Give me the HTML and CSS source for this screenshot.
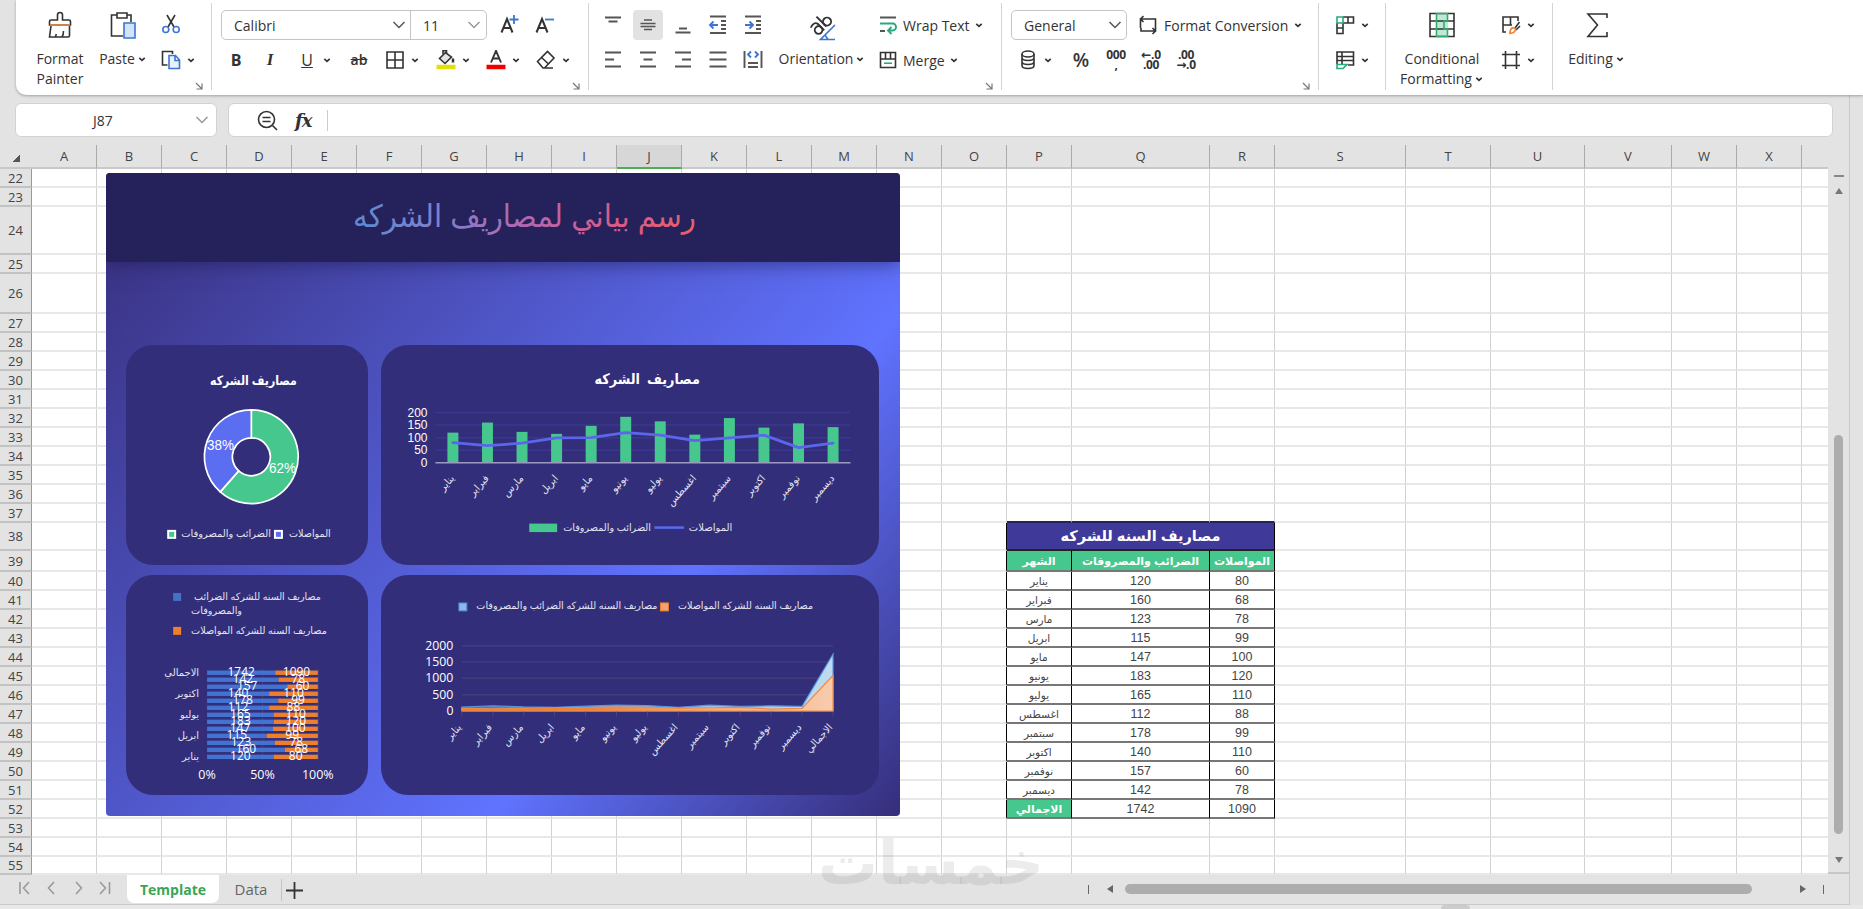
FILE: index.html
```html
<!DOCTYPE html>
<html lang="en">
<head>
    <meta charset="UTF-8">
    <meta name="viewport" content="width=device-width, initial-scale=1.0">
    <title>Template</title>
    <link rel="stylesheet" href="styles.css">
</head>
<body>
    <svg class="defs">
        <symbol id="chev" viewBox="0 0 10 10"><path d="M2.300 3.800 5 6.300 7.700 3.800" fill="none" stroke="#333" stroke-width="1.7"/></symbol>
        <symbol id="caret" viewBox="0 0 14 10"><path d="M1.500 2 7 7.500 12.500 2" fill="none" stroke="currentColor" stroke-width="1.5"/></symbol>
        <symbol id="corner" viewBox="0 0 8 8"><path d="M1 1 6.500 6.500M7 1.500V7H1.500" fill="none" stroke="#777" stroke-width="1.2"/></symbol>
    </svg>

    <div class="ribbon">
        <div class="group clipboard">
            <div class="big painter">
                <svg width="26" height="28" viewBox="0 0 26 28" class="ic"><path d="M10.500 9V4a2.500 2.500 0 0 1 5 0V9H22a1.500 1.500 0 0 1 1.500 1.500V14h-21v-3.500A1.500 1.500 0 0 1 4 9zM4 15 2.500 26H21a1.500 1.500 0 0 0 1.500-1.500V15M15 26q1.500-2 1.500-6M8.500 26l.8-3"/><path d="M3 14h20" stroke="#f08a3c"/></svg>
                <span>Format<br>Painter</span>
            </div>
            <div class="big paste">
                <svg width="28" height="28" viewBox="0 0 28 28" class="ic"><path d="M8 4H2.500v21H14M18 4h4v7M8 2h10v5H8z"/><path d="M15 12h11v15H15z" fill="#cfe6fa" stroke="#3f74d1"/></svg>
                <span>Paste<svg class="chev"><use href="#chev"/></svg></span>
            </div>
            <div class="stack">
                <svg width="20" height="20" viewBox="0 0 20 20" class="ic"><path d="M6 1l7 12M14 1 7 13"/><circle cx="4.800" cy="15.500" r="3" stroke="#3f74d1"/><circle cx="15.200" cy="15.500" r="3" stroke="#3f74d1"/></svg>
                <div class="drop"><svg width="20" height="20" viewBox="0 0 20 20" class="ic"><path d="M6.500 15H1.500V1.500h10V4"/><path d="M8 5.500h6.500L18.500 10v8.500H8zM14 6v4.500h4" stroke="#3f74d1" fill="#eaf3fd"/></svg><svg class="chev"><use href="#chev"/></svg></div>
            </div>
            <svg class="corner"><use href="#corner"/></svg>
        </div>

        <div class="group font">
            <div class="row">
                <div class="combo">
                    <div class="name">Calibri<svg class="caret"><use href="#caret"/></svg></div>
                    <div class="size">11<svg class="caret light"><use href="#caret"/></svg></div>
                </div>
                <svg width="20" height="22" viewBox="0 0 20 22" class="ic grow"><path d="M1.500 18.500 7 5l5.500 13.500M3.500 14h7" stroke-width="2"/><path d="M14 1v9M9.500 5.500h9" stroke="#3f74d1" stroke-width="1.800"/></svg>
                <svg width="20" height="22" viewBox="0 0 20 22" class="ic shrink"><path d="M1.500 18.500 7 5l5.500 13.500M3.500 14h7" stroke-width="2"/><path d="M10 5.500h9" stroke="#3f74d1" stroke-width="1.800"/></svg>
            </div>
            <div class="row marks">
                <b class="mark">B</b>
                <i class="mark">I</i>
                <div class="drop"><u class="mark">U</u><svg class="chev"><use href="#chev"/></svg></div>
                <s class="mark">ab</s>
                <div class="drop"><svg width="20" height="20" viewBox="0 0 20 20" class="ic"><path d="M2 2h16v16H2zM10 2v16M2 10h16"/></svg><svg class="chev"><use href="#chev"/></svg></div>
                <div class="drop"><svg width="20" height="20" viewBox="0 0 20 20" class="ic"><path d="M9.500 2.500 3.500 8.500l5.500 5 6.500-6.500z" fill="#e4e4e4"/><path d="M7 4V.800h3.500V4"/><path d="M17 8.500v4" stroke-width="2.500"/><path d="M.5 17h19" stroke="#e3df0b" stroke-width="4.500"/></svg><svg class="chev"><use href="#chev"/></svg></div>
                <div class="drop"><svg width="20" height="20" viewBox="0 0 20 20" class="ic"><path d="M5 12.500 10 .800l5 11.700M6.500 8.500h7" stroke-width="1.900"/><path d="M.5 17h19" stroke="#f00000" stroke-width="4.500"/></svg><svg class="chev"><use href="#chev"/></svg></div>
                <div class="drop"><svg width="20" height="20" viewBox="0 0 20 20" class="ic"><path d="M1.500 11.500 11.500 1.500l6.500 6.500L8.500 18H7zM5.500 7.500l7 6.500M7 18h10"/></svg><svg class="chev"><use href="#chev"/></svg></div>
            </div>
            <svg class="corner"><use href="#corner"/></svg>
        </div>

        <div class="group align">
            <div class="aligns">
                <span><svg width="20" height="20" viewBox="0 0 20 20" class="ln"><path d="M2 2.500h16M5.500 6.500h9"/></svg></span>
                <span class="on"><svg width="20" height="20" viewBox="0 0 20 20" class="ln"><path d="M6 5h8M2.500 8.500h15M2.500 11.500h15M6 14.500h8" stroke-width="1.600"/></svg></span>
                <span><svg width="20" height="20" viewBox="0 0 20 20" class="ln"><path d="M6 13.500h8M2.500 17.500h15"/></svg></span>
                <span><svg width="20" height="20" viewBox="0 0 20 20" class="ln"><path d="M2 1.500h16M13 6h5M13 10h5M13 14h5M2 18h16"/><path d="M10 10H2M5.500 6.500 2 10l3.500 3.500" stroke="#3f74d1"/></svg></span>
                <span><svg width="20" height="20" viewBox="0 0 20 20" class="ln"><path d="M2 1.500h16M13 6h5M13 10h5M13 14h5M2 18h16"/><path d="M2 10h8M6.500 6.500 10 10l-3.500 3.500" stroke="#3f74d1"/></svg></span>
                <span><svg width="20" height="20" viewBox="0 0 20 20" class="ln"><path d="M2 2.500h16M2 9.500h9M2 16.500h16"/></svg></span>
                <span><svg width="20" height="20" viewBox="0 0 20 20" class="ln"><path d="M2 2.500h16M5.500 9.500h9M2 16.500h16"/></svg></span>
                <span><svg width="20" height="20" viewBox="0 0 20 20" class="ln"><path d="M2 2.500h16M9 9.500h9M2 16.500h16"/></svg></span>
                <span><svg width="20" height="20" viewBox="0 0 20 20" class="ln"><path d="M1.500 2.500h17M1.500 9.500h17M1.500 16.500h17"/></svg></span>
                <span><svg width="20" height="20" viewBox="0 0 20 20" class="ln"><path d="M1.500 1v17M18.500 1v17M5 13h10M5 17h10"/><path d="M8 1.500 5 4.500l3 3M12 1.500l3 3-3 3" stroke="#3f74d1"/></svg></span>
            </div>
            <div class="big orient">
                <svg width="28" height="30" viewBox="0 0 28 30" class="ic"><g transform="rotate(45 12 12)" stroke-width="1.900"><circle cx="6" cy="16" r="3.800" transform="rotate(-90 12 12)"/><path d="M16 15.700V6.500q-.5-3-4-3-2.500 0-3.500 1" transform="rotate(-90 12 12) translate(-6.200 4.500)"/><path d="M10 -2v14" transform="rotate(-90 12 12) translate(4 7)"/><circle cx="18" cy="16" r="4" transform="rotate(-90 12 12)"/></g><path d="M27 14 12.500 28.500H27M17 24l3 4.500" stroke="#3f74d1"/></svg>
                <span>Orientation<svg class="chev"><use href="#chev"/></svg></span>
            </div>
            <div class="stack labels">
                <div class="labeled"><svg width="18" height="20" viewBox="0 0 18 20" class="ic"><path d="M1 2.500h16M1 16h5" stroke="#555" stroke-width="2"/><path d="M1 8.500h13a3 3.500 0 0 1 0 7H9.500M12.500 12l-3.500 3.500 3.500 3.500" stroke="#2ba882" stroke-width="1.900"/></svg>Wrap Text<svg class="chev"><use href="#chev"/></svg></div>
                <div class="labeled"><svg width="18" height="20" viewBox="0 0 18 20" class="ic"><path d="M1.500 2.500h15v15h-15zM1.500 9h15M6.500 2.500V9M11.500 2.500V9"/><path d="M5 13.200h8" stroke="#2ba882"/></svg>Merge<svg class="chev"><use href="#chev"/></svg></div>
            </div>
            <svg class="corner"><use href="#corner"/></svg>
        </div>

        <div class="group number">
            <div class="row">
                <div class="combo general"><div>General<svg class="caret"><use href="#caret"/></svg></div></div>
                <div class="labeled conv"><svg width="18" height="20" viewBox="0 0 18 20" class="ic"><path d="M1.500 13V4h15v3M4.500 1 1.500 4l3 3M16.500 7v9H2v-3M13.500 13l3 3-3 3"/></svg>Format Conversion<svg class="chev"><use href="#chev"/></svg></div>
            </div>
            <div class="row nums">
                <div class="drop"><svg width="20" height="20" viewBox="0 0 20 20" class="ic"><ellipse cx="10" cy="4" rx="6" ry="3"/><path d="M4 4v3.500c0 4 12 4 12 0V4M4 7.500v4c0 4 12 4 12 0v-4M4 11.500v4c0 4 12 4 12 0v-4"/></svg><svg class="chev"><use href="#chev"/></svg></div>
                <span class="pct">%</span>
                <span class="tiny">000<br>,</span>
                <span class="tiny">&#8592;.0<br>.00</span>
                <span class="tiny">.00<br>&#8594;.0</span>
            </div>
            <svg class="corner"><use href="#corner"/></svg>
        </div>

        <div class="group cells">
            <div class="drop"><svg width="20" height="20" viewBox="0 0 20 20" class="ic"><path d="M8 2h10.500v6H8M13 2v6M2 8v10.500h6V8M2 13h6"/><path d="M2 2h6v6H2z" stroke="#2ba882"/></svg><svg class="chev"><use href="#chev"/></svg></div>
            <div class="drop"><svg width="20" height="20" viewBox="0 0 20 20" class="ic"><path d="M2 14V2h16.500v13H13M2 6.500h16.500M7 2v12M2 10.500h16.500"/><path d="M2 14.500h10l-4 4H2z" stroke="#2ba882"/></svg><svg class="chev"><use href="#chev"/></svg></div>
        </div>

        <div class="group styles">
            <div class="big cond">
                <svg width="26" height="28" viewBox="0 0 26 28" class="ic"><path d="M8 2h11v24H8z" fill="#bfeadb" stroke="none"/><path d="M1 2.500h24v23H1zM1 10h24M1 18h24"/><path d="M7.500 2.500h11v7.500h-3.500v8h3.500v7.500h-11z" stroke="#34ad6c"/></svg>
                <span>Conditional<br>Formatting<svg class="chev"><use href="#chev"/></svg></span>
            </div>
            <div class="stack">
                <div class="drop"><svg width="20" height="20" viewBox="0 0 20 20" class="ic"><path d="M5 17H2V2h15v4M2 10h9M9.500 2v8M18.500 7 14 13M19 11l-4 4"/><path d="M9 18.500c0-4 1.500-6 4-5.500s2 5-4 5.500z" stroke="#f08030"/></svg><svg class="chev"><use href="#chev"/></svg></div>
                <div class="drop"><svg width="20" height="20" viewBox="0 0 20 20" class="ic"><path d="M4.500 1v18M15.500 1v18M1 4.500h18M1 15.500h18"/></svg><svg class="chev"><use href="#chev"/></svg></div>
            </div>
        </div>

        <div class="group editing">
            <div class="big">
                <svg width="24" height="28" viewBox="0 0 24 28" class="ic"><path d="M22 7V3H3l9.500 11L3 25.500h19V21"/></svg>
                <span>Editing<svg class="chev"><use href="#chev"/></svg></span>
            </div>
        </div>
    </div>

    <div class="main">
        <div class="left">
            <div class="formula">
                <div class="namebox">J87<svg class="caret light"><use href="#caret"/></svg></div>
                <div class="fbar">
                    <svg width="21" height="21" viewBox="0 0 21 21" class="ic"><circle cx="9.500" cy="9.500" r="8"/><path d="M15.500 15.500 20 20M5.500 7.500h8M5.500 11.500h8"/></svg>
                    <span class="fx">fx</span>
                    <span class="bar"></span>
                </div>
            </div>

            <div class="sheet">
                <table class="grid" id="grid"></table>

                <!-- charts floating above the cells -->
                <div class="dash">
                    <div class="dash-head">
                        <svg width="794" height="89">
                            <linearGradient id="title" x1="0" x2="1"><stop offset="0" stop-color="#5a8bd2"/><stop offset=".25" stop-color="#8080cc"/><stop offset=".5" stop-color="#b068b0"/><stop offset=".78" stop-color="#dc5a84"/><stop offset="1" stop-color="#e85f68"/></linearGradient>
                            <text x="247" y="54" font-size="31" textLength="343" lengthAdjust="spacingAndGlyphs" fill="url(#title)">رسم بياني لمصاريف الشركه</text>
                        </svg>
                    </div>
                    <div class="cards">
                        <svg class="card" viewBox="0 0 242 220">
                            <text x="84" y="40" font-size="13" font-weight="bold" textLength="87" lengthAdjust="spacingAndGlyphs">مصاريف الشركه</text>
                            <g stroke="#fff" stroke-width="1.700">
                                <path d="M125.300 65A47 47 0 1 1 94.200 147.200L112.700 126.200A19 19 0 1 0 125.300 93z" fill="#45c78d"/>
                                <path d="M94.200 147.200A47 47 0 0 1 125.300 65V93A19 19 0 0 0 112.700 126.200z" fill="#5b6df0"/>
                            </g>
                            <text x="81" y="105.500" font-size="14" textLength="27" lengthAdjust="spacingAndGlyphs">38%</text>
                            <text x="143" y="128.500" font-size="14" textLength="27" lengthAdjust="spacingAndGlyphs">62%</text>
                            <rect x="42" y="186.300" width="7" height="7" fill="#45c78d" stroke="#fff" stroke-width="2"/>
                            <rect x="149" y="186.300" width="7" height="7" fill="#5b6df0" stroke="#fff" stroke-width="2"/>
                            <text class="leg" x="55" y="192" textLength="90" lengthAdjust="spacingAndGlyphs">الضرائب والمصروفات</text>
                            <text class="leg" x="163" y="192" textLength="42" lengthAdjust="spacingAndGlyphs">المواصلات</text>
                        </svg>
                        <svg class="card" viewBox="0 0 498 220">
                            <text x="213.500" y="39.500" font-size="14.500" font-weight="bold" textLength="105.500" lengthAdjust="spacingAndGlyphs" xml:space="preserve">مصاريف  الشركه</text>
                            <g id="combo"></g>
                            <rect x="148" y="179" width="28" height="8.500" fill="#45c78d"/>
                            <path d="M273.500 183H303" stroke="#5b6bf0" stroke-width="2.500"/>
                            <text class="leg" x="182" y="186.500" textLength="88" lengthAdjust="spacingAndGlyphs">الضرائب والمصروفات</text>
                            <text class="leg" x="308" y="186.500" textLength="43.500" lengthAdjust="spacingAndGlyphs">المواصلات</text>
                        </svg>
                        <svg class="card" viewBox="0 0 242 220">
                            <rect x="47" y="18" width="8" height="8" fill="#4472c4"/>
                            <rect x="47" y="52" width="8" height="8" fill="#ec7f2e"/>
                            <text class="leg" x="68" y="25" textLength="127" lengthAdjust="spacingAndGlyphs">مصاريف السنه للشركه الضرائب</text>
                            <text class="leg" x="65" y="39.300" textLength="51" lengthAdjust="spacingAndGlyphs">والمصروفات</text>
                            <text class="leg" x="65" y="59" textLength="136" lengthAdjust="spacingAndGlyphs">مصاريف السنه للشركه المواصلات</text>
                            <g id="stacked" class="os"></g>
                        </svg>
                        <svg class="card" viewBox="0 0 498 220">
                            <linearGradient id="blues" x1="0" x2="1"><stop offset="0" stop-color="#4472c4"/><stop offset=".5" stop-color="#8fb9e2"/><stop offset="1" stop-color="#bddcf0"/></linearGradient>
                            <linearGradient id="oranges" x1="0" x2="1"><stop offset="0" stop-color="#ed7d31"/><stop offset=".35" stop-color="#ed8338"/><stop offset=".7" stop-color="#f3ae80"/><stop offset="1" stop-color="#f8cbad"/></linearGradient>
                            <rect x="77.500" y="28" width="8" height="8" fill="#8fb9e2" stroke="#4a86d0"/>
                            <rect x="279.500" y="28" width="8" height="8" fill="#f2a46c" stroke="#ed7d31"/>
                            <text class="leg" x="95" y="34.500" textLength="181.500" lengthAdjust="spacingAndGlyphs">مصاريف السنه للشركه الضرائب والمصروفات</text>
                            <text class="leg" x="297" y="34.500" textLength="135.500" lengthAdjust="spacingAndGlyphs">مصاريف السنه للشركه المواصلات</text>
                            <g id="area" class="os"></g>
                        </svg>
                    </div>
                </div>

                <div class="vscroll">
                    <i class="dashmark"></i>
                    <i class="up"></i>
                    <i class="vthumb"></i>
                    <i class="down"></i>
                </div>
            </div>

            <div class="tabs">
                <svg width="94" height="14" viewBox="0 0 94 14" class="nav"><path d="M1 1v12M10 1 4.500 7 10 13M35 1 29.500 7 35 13M57 1l5.500 6L57 13M81 1l5.500 6L81 13M90.500 1v12"/></svg>
                <span class="tab active">Template</span>
                <span class="tab">Data</span>
                <span class="plus"><svg width="17" height="17" viewBox="0 0 17 17" class="ic"><path d="M8.500 0v17M0 8.500h17" stroke-width="1.800"/></svg></span>
                <div class="hscroll">
                    <i class="tick"></i>
                    <i class="prev"></i>
                    <i class="hthumb"></i>
                    <i class="next"></i>
                    <i class="tick"></i>
                </div>
            </div>
            <svg class="watermark" width="228" height="64"><text x="0" y="48" font-size="60" font-weight="bold" textLength="226" lengthAdjust="spacingAndGlyphs">خمسات</text></svg>
        </div>
        <div class="side"></div>
    </div>
    <div class="status"><i></i></div>

    <script>
        const months = ['يناير', 'فبراير', 'مارس', 'ابريل', 'مايو', 'يونيو', 'يوليو', 'اغسطس', 'سبتمبر', 'اكتوبر', 'نوفمبر', 'ديسمبر', 'الاجمالي'];
        const taxes = [120, 160, 123, 115, 147, 183, 165, 112, 178, 140, 157, 142, 1742];
        const transport = [80, 68, 78, 99, 100, 120, 110, 88, 99, 110, 60, 78, 1090];

        // sheet
        const widths = { Q: 138, S: 131, T: 85, U: 94, V: 87 };
        const heights = { 24: 48, 26: 40, 38: 28, 39: 21, 55: 18 };
        const cols = 'ABCDEFGHIJKLMNOPQRSTUVWX'.split('');
        let html = '<colgroup><col style="width:32px">';
        cols.forEach(c => html += `<col style="width:${widths[c] || 65}px">`);
        html += '<col style="width:26px"></colgroup><tr class="head"><th class="all"></th>';
        cols.forEach(c => html += `<th class="${c === 'J' ? 'sel' : ''}">${c}</th>`);
        html += '<th class="last"></th></tr>';

        for (let r = 22; r <= 55; r++) {
            html += `<tr style="height:${heights[r] || 19}px"><th>${r}</th>`;
            cols.concat('').forEach(c => {
                const inTable = r >= 38 && r <= 52;
                if (r === 38 && c === 'P') {
                    html += '<td colspan="3" class="box title">مصاريف السنه للشركه</td>';
                } else if (r === 38 && (c === 'Q' || c === 'R')) {
                    return;
                } else if (inTable && 'PQR'.includes(c) && c) {
                    const i = 'PQR'.indexOf(c);
                    const text = r === 39 ? ['الشهر', 'الضرائب والمصروفات', 'المواصلات'][i] : [months, taxes, transport][i][r - 40];
                    const green = r === 39 || (r === 52 && c === 'P');
                    html += `<td class="box ${green ? 'green' : ''} ${c === 'P' ? 'ar' : ''}">${text}</td>`;
                } else {
                    const edge = inTable && c === 'O' ? 'edge' : r === 37 && c && 'PQR'.includes(c) ? 'over' : '';
                    html += `<td class="${edge}"></td>`;
                }
            });
            html += '</tr>';
        }
        document.getElementById('grid').innerHTML = html;

        // columns with line
        let s = '';
        [200, 150, 100, 50, 0].forEach(v => {
            const y = 118 - v * 0.2515;
            s += `<path d="M54 ${y}H470" stroke="#3d3690" stroke-width="1.5"/><text x="46" y="${y + 4}" font-size="12" text-anchor="end">${v}</text>`;
        });
        let points = '';
        for (let i = 0; i < 12; i++) {
            const x = 71.5 + i * 34.64;
            s += `<rect x="${x - 5.5}" y="${118 - taxes[i] * 0.2515}" width="11" height="${taxes[i] * 0.2515}" fill="#45c78d"/>`;
            s += `<text class="leg" text-anchor="end" transform="translate(${x + 2} 134) rotate(-48)">${months[i]}</text>`;
            points += `${x},${118 - transport[i] * 0.2515} `;
        }
        s += `<path d="M54 118H470" stroke="#9c98c0" stroke-width="1.7"/><polyline points="${points}" fill="none" stroke="#5b66ea" stroke-width="2.8" stroke-linejoin="round" stroke-linecap="round"/>`;
        document.getElementById('combo').innerHTML = s;

        // stacked bars, last row on top
        s = '<path d="M136.500 94V185M192.500 94V185" stroke="#46407f"/>';
        let labels = '';
        months.forEach((m, i) => {
            const y = 182.3 - i * 7.03;
            const w = 111 * taxes[i] / (taxes[i] + transport[i]);
            s += `<rect x="81" y="${y - 2.2}" width="${w}" height="4.4" fill="#4472d0"/><rect x="${81 + w}" y="${y - 2.2}" width="${111 - w}" height="4.4" fill="#ec7f2e"/>`;
            labels += `<text x="${81 + w / 2}" y="${y + 3.5}" font-size="12" text-anchor="middle">${taxes[i]}</text><text x="${81 + (111 + w) / 2}" y="${y + 3.5}" font-size="12" text-anchor="middle">${transport[i]}</text>`;
            if (i % 3 === 0) labels += `<text class="leg" x="73" y="${y + 3}" text-anchor="end">${m}</text>`;
        });
        ['0%', '50%', '100%'].forEach((t, i) => labels += `<text x="${81 + i * 55.5}" y="204.5" font-size="12.5" text-anchor="middle">${t}</text>`);
        document.getElementById('stacked').innerHTML = s + labels;

        // areas
        s = '';
        [2000, 1500, 1000, 500, 0].forEach(v => {
            const y = 136.3 - v * 0.03275;
            s += `<path d="M80.5 ${y}H452.5" stroke="#423c7e" stroke-width="1.5"/><text x="72" y="${y + 4}" font-size="12.3" text-anchor="end">${v}</text>`;
        });
        const line = data => data.map((v, i) => `${80.5 + i * 31},${136.3 - v * 0.03275}`).join(' ');
        s += `<polygon points="80.5,136.3 ${line(taxes)} 452.5,136.3" fill="url(#blues)" stroke="#5b93dc" stroke-width="1.2"/>`;
        s += `<polygon points="80.5,136.3 ${line(transport)} 452.5,136.3" fill="url(#oranges)" stroke="#ed8b45" stroke-width="1.2"/>`;
        months.forEach((m, i) => {
            const x = 80.5 + i * 31;
            s += `<path d="M${x} 137v5" stroke="#4a447f"/><text class="leg" text-anchor="end" transform="translate(${x} 153) rotate(-48)">${m}</text>`;
        });
        document.getElementById('area').innerHTML = s;
    </script>
</body>
</html>
```
FILE: styles.css
```css
* {
    box-sizing: border-box;
}

body {
    margin: 0;
    height: 909px;
    overflow: hidden;
    background: #e3e3e3;
    color: #333;
    font-family: "Open Sans", "DejaVu Sans", sans-serif;
    font-size: 14px;
    display: flex;
    flex-direction: column;
}

svg {
    display: block;
    flex-shrink: 0;
}

.defs {
    width: 0;
    height: 0;
    position: absolute;
}

.ic, .ln {
    fill: none;
    stroke: #333;
    stroke-width: 1.6;
}

.ln {
    stroke: #555;
    stroke-width: 1.9;
}

/* ribbon */
.ribbon {
    display: flex;
    height: 95px;
    margin-left: 16px;
    padding-top: 3px;
    background: #fff;
    border-bottom-left-radius: 10px;
    box-shadow: 0 1px 3px rgba(0, 0, 0, 0.3);
    z-index: 1;
}

.group {
    position: relative;
    height: 87px;
    border-right: 1px solid #d4d4d4;
    display: flex;
}

.corner {
    position: absolute;
    right: 8px;
    bottom: 0;
    width: 8px;
    height: 8px;
}

.chev {
    display: inline-block;
    width: 10px;
    height: 10px;
    margin-left: 2px;
}

.drop {
    display: flex;
    align-items: center;
    height: 20px;
    gap: 5px;
}

.drop .chev {
    margin-left: 0;
}

.big {
    display: flex;
    flex-direction: column;
    align-items: center;
    text-align: center;
    line-height: 20px;
    padding-top: 8px;
    white-space: nowrap;
}

.big span {
    margin-top: 10px;
}

.stack {
    display: flex;
    flex-direction: column;
    gap: 15px;
    padding-top: 12px;
}

.row {
    display: flex;
    align-items: center;
}

.labeled {
    display: flex;
    align-items: center;
    height: 20px;
    gap: 5px;
    white-space: nowrap;
}

.clipboard { width: 196px; }
.clipboard .stack { align-items: flex-start; margin-left: 10px; padding-top: 11px; gap: 16px; }
.painter { width: 60px; margin-left: 14px; }
.paste { width: 56px; margin-left: 5px; }

.combo {
    display: flex;
    height: 30px;
    border: 1px solid #c4c4c4;
    border-radius: 5px;
}

.combo div {
    display: flex;
    align-items: center;
    justify-content: space-between;
    padding: 0 4px 0 12px;
}

.caret {
    width: 14px;
    height: 10px;
    color: #555;
}

.light {
    color: #999;
}

.font { width: 377px; flex-direction: column; padding: 7px 0 0 9px; }
.font .name { width: 189px; border-right: 1px solid #c4c4c4; }
.font .size { width: 75px; padding-right: 5px; }
.grow { margin-left: 13px; }
.shrink { margin-left: 15px; }

.marks {
    display: grid;
    grid-template-columns: 34px 37px 52px 36px 51px 49.5px 50.5px 35px;
    margin: 10px 0 0 5px;
}

.mark {
    width: 20px;
    text-align: center;
    font-size: 16px;
    line-height: 20px;
}

s.mark {
    font-weight: 600;
    font-size: 14px;
}

i.mark {
    font-family: "Liberation Serif", serif;
    font-weight: bold;
    font-size: 17px;
}

.align { width: 413px; }

.aligns {
    display: grid;
    grid-template-columns: repeat(5, 30px);
    grid-auto-rows: 30px;
    gap: 5px;
    padding: 7px 0 0 9px;
}

.aligns span {
    display: flex;
    align-items: center;
    justify-content: center;
    border-radius: 4px;
}

.aligns .on {
    background: #e2e2e2;
}

.orient { width: 90px; margin-left: 9px; }
.orient span { margin-top: 8px; }
.align .labels { margin-left: 12px; }

.align .labeled {
    gap: 6px;
}

.align .labeled .chev, .conv .chev {
    margin-left: -2px;
}

.number { width: 317px; flex-direction: column; padding: 7px 0 0 9px; }
.general { width: 116px; }
.general div { width: 100%; }
.conv { margin-left: 12px; gap: 7px; }

.nums {
    display: grid;
    grid-template-columns: 50px 34px 35px 35px 35px;
    margin: 10px 0 0 7px;
}

.pct {
    width: 26px;
    font-size: 19px;
    font-weight: 600;
    line-height: 20px;
    text-align: center;
}

.tiny {
    width: 28px;
    font-size: 12px;
    font-weight: bold;
    line-height: 10px;
    text-align: center;
    letter-spacing: -0.3px;
}

.cells { width: 67px; flex-direction: column; gap: 15px; padding: 12px 0 0 16px; }
.styles { width: 167px; }
.cond { width: 92px; margin-left: 10px; }
.styles .stack { margin-left: 13px; }
.editing { border: 0; }
.editing .big { width: 87px; }

/* formula bar */
.main {
    display: flex;
    height: 810px;
}

.left {
    position: relative;
    width: 1849px;
}

.side {
    flex: 1;
    border-left: 1px solid #c9c9c9;
}

.formula {
    display: flex;
    gap: 11px;
    height: 50px;
    padding: 8px 0 0 15px;
}

.namebox, .fbar {
    display: flex;
    align-items: center;
    height: 34px;
    background: #fff;
    border: 1px solid #d2d2d2;
    border-radius: 6px;
}

.namebox {
    width: 202px;
    padding: 0 7px 0 77px;
    justify-content: space-between;
}

.fbar {
    width: 1605px;
    padding-left: 28px;
}

.fx {
    margin-left: 17px;
    font: italic bold 18px "DejaVu Serif", serif;
    letter-spacing: -1px;
}

.bar {
    height: 21px;
    margin-left: 16px;
    border-left: 1px solid #ccc;
}

/* cells */
.sheet {
    position: relative;
    display: flex;
    height: 729px;
}

.grid {
    width: 1828px;
    height: 729px;
    table-layout: fixed;
    border-collapse: separate;
    border-spacing: 0;
    background: #fff;
}

.grid th, .grid td {
    padding: 0;
    line-height: 14px;
    overflow: hidden;
    white-space: nowrap;
}

.grid th {
    background: #e3e3e3;
    border-right: 1px solid #999;
    border-bottom: 2px solid #c2c2c2;
    font-weight: normal;
    font-size: 13px;
    color: #444;
}

.grid .head {
    height: 24px;
}

.grid .head th {
    border-right-color: #aaa;
    border-bottom-color: #c8c8c8;
}

.grid .head .all {
    background: linear-gradient(135deg, transparent 50%, #555 50%) 13px 10px / 7px 7px no-repeat #e3e3e3;
    border-right: 0;
}

.grid .head .last {
    border-right: 0;
}

.grid .head .sel {
    background: #d7d7d7;
    border-bottom-color: #4caf50;
}

.grid td {
    border-right: 1px solid #d2d2d2;
    border-bottom: 2px solid #e8e8e8;
    text-align: center;
}

.grid td:last-child {
    border-right: 0;
}

.grid .edge {
    border-right-color: #000;
}

.grid .over {
    border-bottom-color: #25215a;
}

.grid .box {
    border-right-color: #000;
    border-bottom-color: #777;
    font-family: "Liberation Sans", "DejaVu Sans", sans-serif;
    font-size: 12.5px;
    color: #444;
}

.grid .ar {
    font-size: 10.5px;
}

.grid .title {
    background: #3f3a99;
    border-bottom-color: #222;
    color: #fff;
    font-size: 14.5px;
    font-weight: bold;
}

.grid .green {
    background: #45c78d;
    color: #fff;
    font-size: 11px;
    font-weight: bold;
}

/* dashboard */
.dash {
    position: absolute;
    left: 106px;
    top: 28px;
    width: 794px;
    height: 643px;
    border-radius: 4px;
    overflow: hidden;
    background: linear-gradient(129deg, #382f7c 0%, #6073ff 69%, #352e7a 100%);
}

.dash-head {
    height: 89px;
    background: #25215a;
    box-shadow: 0 2px 18px rgba(30, 25, 80, 0.6);
}

.cards {
    display: grid;
    grid-template-columns: 242px 498px;
    grid-auto-rows: 219.5px;
    gap: 10.5px 13px;
    padding: 83px 0 0 20px;
}

.card {
    width: 100%;
    height: 100%;
    border-radius: 27px;
    background: #322e7a;
}

.dash text {
    font-family: "Liberation Sans", "DejaVu Sans", sans-serif;
}

.card text {
    fill: #fff;
}

.dash .os text {
    font-family: "Open Sans", "DejaVu Sans", sans-serif;
}

.card .leg {
    font-size: 10px;
    fill: #e4e4f0;
}

/* scrollbars and tabs */
.vscroll {
    position: relative;
    flex: 1;
    margin-top: 24px;
    border-bottom: 2px solid #c6c6c6;
    display: flex;
    flex-direction: column;
    align-items: center;
}

.dashmark {
    width: 10px;
    height: 2px;
    margin-top: 6px;
    background: #888;
}

.up, .down {
    border: 4px solid transparent;
}

.up { border-bottom: 6px solid #777; border-top: 0; margin-top: 11px; }
.down { border-top: 6px solid #777; border-bottom: 0; margin-top: 23px; }

.vthumb {
    width: 9px;
    height: 399px;
    margin-top: 241px;
    border-radius: 5px;
    background: #adadad;
}

.tabs {
    display: flex;
    height: 31px;
    border-bottom: 1px solid #c9c9c9;
    font-size: 15px;
    color: #666;
}

.nav {
    margin: 7px 14px 0 19px;
    fill: none;
    stroke: #999;
    stroke-width: 1.6;
}

.tab {
    width: 64px;
    height: 29px;
    line-height: 31px;
    text-align: center;
}

.tab.active {
    width: 92px;
    background: #fff;
    border-radius: 0 0 7px 7px;
    color: #3aa655;
    font-weight: bold;
    font-size: 14px;
}

.plus {
    height: 22px;
    margin: 5px 0 0 -2px;
    padding: 3px 0 0 4px;
    border-left: 1px solid #c4c4c4;
}

.hscroll {
    display: flex;
    align-items: center;
    height: 30px;
    margin-left: auto;
    padding-right: 25px;
}

.tick {
    width: 1px;
    height: 9px;
    background: #666;
}

.prev, .next {
    border: 4px solid transparent;
}

.prev { border-right: 6px solid #666; border-left: 0; margin: 0 12px 0 18px; }
.next { border-left: 6px solid #666; border-right: 0; margin: 0 17px 0 48px; }

.hthumb {
    width: 627px;
    height: 10px;
    border-radius: 5px;
    background: #adadad;
}

.watermark {
    position: absolute;
    left: 818px;
    top: 741px;
    overflow: visible;
}

.watermark text {
    font-family: "DejaVu Sans", sans-serif;
    fill: rgba(0, 0, 0, 0.075);
}

.status {
    height: 4px;
    background: #e8e8e8;
    padding-left: 1441px;
}

.status i {
    display: block;
    width: 29px;
    height: 4px;
    border-radius: 6px 6px 0 0;
    background: #ccc;
}
```
